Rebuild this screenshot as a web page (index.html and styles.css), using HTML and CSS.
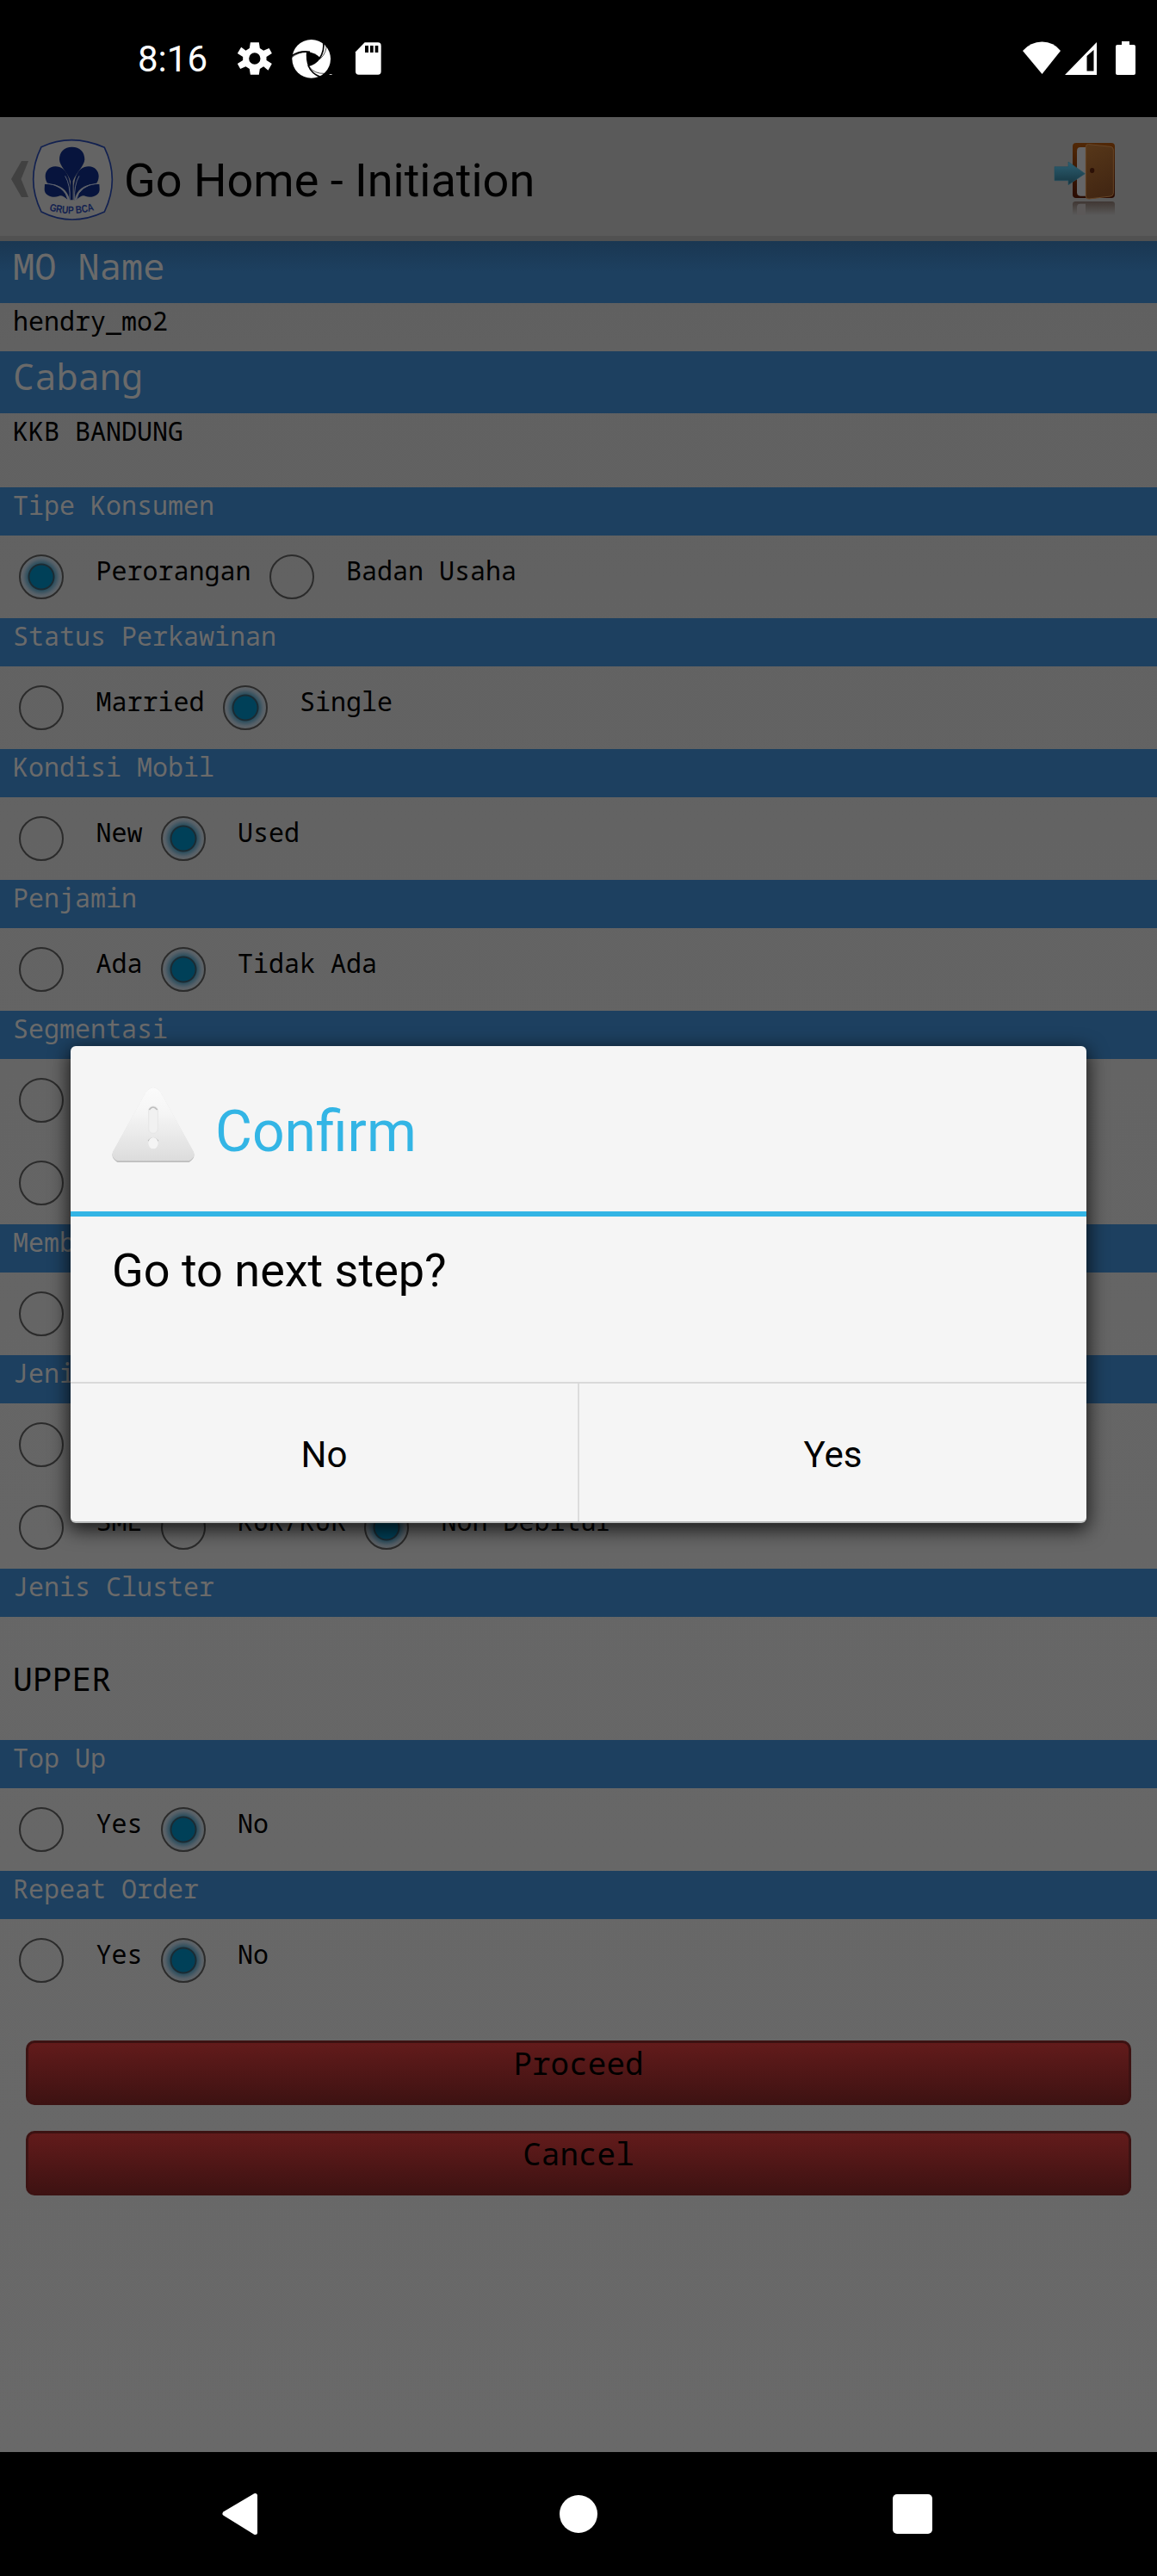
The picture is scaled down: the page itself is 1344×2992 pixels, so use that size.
FILE: index.html
```html
<!DOCTYPE html>
<html lang="id">
<head>
<meta charset="utf-8">
<title>Go Home - Initiation</title>
<link rel="stylesheet" href="styles.css">
</head>
<body>
<div class="screen">
  <header class="status-bar">
    <span class="clock">8:16</span>
    <svg class="notices" width="170" height="48" viewBox="0 0 510 144" fill="#fff">
      <g transform="translate(77.500 72)">
        <path fill-rule="evenodd" d="M-15-56H15L18-36 31-28 50-36 57-24 60-18 41-6V6L60 18 47 41 31 28 18 36 15 56H-15L-18 36-31 28-50 36-60 18-41 6V-6L-60-18-47-40-31-28-18-36ZM0-20A20 20 0 1 0 0 20 20 20 0 1 0 0-20Z"/>
      </g>
      <circle cx="275" cy="73" r="67"/>
      <path fill="#000" d="M258 48Q288 50 307 70Q293 93 264 100Q255 75 258 48Z"/>
      <g fill="none" stroke="#000" stroke-width="5">
        <path d="M206 63Q236 43 270 49M302 74Q323 45 316 9M264 96Q276 125 306 136"/>
        <path d="M327 22Q330 50 306 73M206 68Q232 49 258 50M268 101Q286 126 322 124" stroke-width="2"/>
      </g>
      <path d="M338 126h9v3h-9z" fill="#bbb"/>
      <path d="M462 16H508Q519 16 519 27V117Q519 128 508 128H441Q430 128 430 117V49Z" transform="translate(-1 0)"/>
      <path fill="#000" d="M462 27h12v24h-12zM480 27h11v24h-11zM497 27h11v24h-11z"/>
    </svg>
    <svg class="signals" width="136" height="42" viewBox="0 0 136 42" fill="#fff">
      <path d="M2 13Q11 2.500 24.500 2.500T46 13L24.500 40Z"/>
      <path fill-rule="evenodd" d="M51 41L88 3V41ZM76.500 19V36.500H84.500V12Z"/>
      <path d="M117 2h9v4h5q2 0 2 2v31q0 2-2 2h-19q-2 0-2-2V8q0-2 2-2h5z"/>
    </svg>
  </header>

  <nav class="action-bar">
    <svg class="up" width="22" height="44" viewBox="0 0 22 44"><path d="M13 1H21L12.500 22 21 43H13L1 22Z" fill="#414141"/></svg>
    <svg class="logo" width="97" height="97" viewBox="108 60 291 291">
      <path d="M144 92Q250 43 364 94Q418 205 364 318Q250 372 144 318Q88 205 144 92Z" fill="#646464" stroke="#122150" stroke-width="5"/>
      <g fill="#07143d">
        <path d="M251 92C278 92 295 109 295 136C294 158 266 180 254 211V277H246V211C236 180 207 158 207 136C207 109 224 92 251 92Z"/>
        <path d="M241 206C232 171 212 160 193 160C171 160 158 177 158 193C158 208 164 219 169 222C202 219 236 238 243 277H245V226Z"/>
        <path d="M261 206C270 171 290 160 309 160C331 160 344 177 344 193C344 208 338 219 333 222C300 219 266 238 260 277H257V226Z"/>
        <path d="M156 222C196 220 229 243 236 276C222 263 212 258 203 264C185 271 154 262 155 239Z"/>
        <path d="M346 222C306 220 273 243 266 276C280 263 290 258 299 264C317 271 348 262 347 239Z"/>
      </g>
      <path d="M243 277Q246 226 227 193M260 277Q257 226 276 193M237 277Q228 226 165 219M266 277Q275 226 338 219" fill="none" stroke="#596071" stroke-width="3"/>
      <path id="arc" d="M171 313Q250 337 332 311" fill="none"/>
      <text class="logo-text"><textPath href="#arc" textLength="160" lengthAdjust="spacingAndGlyphs">GRUP BCA</textPath></text>
    </svg>
    <h1 class="title">Go Home - Initiation</h1>
    <svg class="exit" width="76" height="88" viewBox="66 69 228 264">
      <defs>
        <linearGradient id="frame" x2="0" y2="1"><stop stop-color="#512806"/><stop offset="1" stop-color="#290b02"/></linearGradient>
        <linearGradient id="door" x2=".3" y2="1"><stop stop-color="#573719"/><stop offset="1" stop-color="#432713"/></linearGradient>
        <linearGradient id="arrow" x2="0" y2="1"><stop stop-color="#2d6073"/><stop offset="1" stop-color="#16343f"/></linearGradient>
        <linearGradient id="mirror" x2="0" y2="1"><stop stop-color="#403733"/><stop offset="1" stop-color="#5a5a5a"/></linearGradient>
      </defs>
      <path d="M138 330V292Q138 282 148 282H275Q285 282 285 292V330Z" fill="url(#mirror)"/>
      <path d="M153 330V300Q154 290 164 290H183V330Z" fill="#5b5858"/>
      <rect x="138" y="78" width="147" height="192" rx="12" fill="url(#frame)"/>
      <path d="M184 93H165Q153 93 153 106V250Q153 263 165 263H184Z" fill="#656567"/>
      <path d="M184 91Q184 82 194 83L270 91Q280 92 280 102V253Q280 263 270 264L195 273Q184 274 184 264Z" fill="url(#door)" stroke="#664527" stroke-width="3"/>
      <ellipse cx="206" cy="174" rx="8" ry="9" fill="#2b1006"/>
      <path d="M75 161H123V144L181 185 123 224V209H75Z" fill="url(#arrow)" stroke="#23505f" stroke-width="2"/>
    </svg>
  </nav>

  <main class="form">
    <h2 class="bar bar-large bar-first">MO Name</h2>
    <p class="value">hendry_mo2</p>
    <h2 class="bar bar-large">Cabang</h2>
    <p class="value value-tall">KKB BANDUNG</p>

    <h2 class="bar">Tipe Konsumen</h2>
    <div class="options"><label class="option"><i class="radio on"></i>Perorangan</label><label class="option"><i class="radio"></i>Badan Usaha</label></div>
    <h2 class="bar">Status Perkawinan</h2>
    <div class="options"><label class="option"><i class="radio"></i>Married</label><label class="option"><i class="radio on"></i>Single</label></div>
    <h2 class="bar">Kondisi Mobil</h2>
    <div class="options"><label class="option"><i class="radio"></i>New</label><label class="option"><i class="radio on"></i>Used</label></div>
    <h2 class="bar">Penjamin</h2>
    <div class="options"><label class="option"><i class="radio"></i>Ada</label><label class="option"><i class="radio on"></i>Tidak Ada</label></div>
    <h2 class="bar">Segmentasi</h2>
    <div class="options"><label class="option"><i class="radio"></i></label></div>
    <div class="options"><label class="option"><i class="radio"></i></label></div>
    <h2 class="bar">Memb</h2>
    <div class="options"><label class="option"><i class="radio"></i></label></div>
    <h2 class="bar">Jeni</h2>
    <div class="options"><label class="option"><i class="radio"></i></label></div>
    <div class="options"><label class="option"><i class="radio"></i>SME</label><label class="option"><i class="radio"></i>KUK/KUR</label><label class="option"><i class="radio on"></i>Non Debitur</label></div>
    <h2 class="bar">Jenis Cluster</h2>
    <p class="cluster">UPPER</p>
    <h2 class="bar">Top Up</h2>
    <div class="options"><label class="option"><i class="radio"></i>Yes</label><label class="option"><i class="radio on"></i>No</label></div>
    <h2 class="bar">Repeat Order</h2>
    <div class="options"><label class="option"><i class="radio"></i>Yes</label><label class="option"><i class="radio on"></i>No</label></div>

    <div class="actions">
      <button class="action">Proceed</button>
      <button class="action">Cancel</button>
    </div>
  </main>

  <footer class="nav-bar">
    <svg width="44" height="50" viewBox="0 0 44 50"><path d="M4 24.500L39.500 3.500V46.500Z" fill="#fff" stroke="#fff" stroke-width="5" stroke-linejoin="round"/></svg>
    <i class="home"></i>
    <i class="recents"></i>
  </footer>

  <section class="dialog" role="dialog">
    <div class="dialog-head">
      <svg width="98" height="90" viewBox="0 0 294 270">
        <defs><linearGradient id="warn" x2="0" y2="1"><stop stop-color="#fbfbfb"/><stop offset=".35" stop-color="#f5f5f5"/><stop offset="1" stop-color="#dcdcdc"/></linearGradient></defs>
        <path d="M119 22Q147-20 175 22L287 226Q296 246 272 261H22Q-2 246 7 226Z" fill="#bdbdbd"/>
        <path d="M119 20Q147-20 175 20L287 223Q296 243 272 256H22Q-2 243 7 223Z" fill="url(#warn)"/>
        <rect x="131" y="66" width="32" height="94" rx="15" fill="#f1f1f1" stroke="#e6e6e6" stroke-width="3"/>
        <path d="M133 78Q146 60 161 78M130 187Q146 166 164 187" stroke="#bdbdbd" stroke-width="5" fill="none"/>
        <ellipse cx="147" cy="194" rx="17" ry="20" fill="#f4f4f4"/>
      </svg>
      <h2 class="dialog-title">Confirm</h2>
    </div>
    <p class="dialog-text">Go to next step?</p>
    <div class="dialog-buttons">
      <button class="dialog-button">No</button>
      <button class="dialog-button">Yes</button>
    </div>
  </section>
</div>
</body>
</html>
```
FILE: styles.css
```css
* { box-sizing: border-box; margin: 0; padding: 0; }

body {
  width: 1344px;
  background: #000;
  font-family: Roboto, sans-serif;
}

.screen {
  position: relative;
  height: 2992px;
  display: flex;
  flex-direction: column;
  background: linear-gradient(#5b5b5b 136px, #616161 400px, #666 1800px, #696969 2848px);
}

.status-bar {
  height: 136px;
  flex: none;
  display: flex;
  align-items: flex-start;
  padding: 44px 22px 0 160px;
  background: #000;
  color: #fff;
}
.clock { width: 108px; font-size: 42px; line-height: 50px; }
.notices { margin: 0 0 0 2px; overflow: visible; }
.signals { margin: 2px 0 0 auto; }

.action-bar {
  height: 144px;
  flex: none;
  display: flex;
  align-items: flex-start;
  padding: 24px 46px 0 12px;
  background: #5a5a5a;
  border-bottom: 6px solid #515151;
}
.up { margin: 26px 2px 0 0; }
.logo-text { font: bold 37px "Liberation Sans", sans-serif; fill: #122150; }
.title {
  margin: 18px auto 0 11px;
  font-size: 54px;
  font-weight: 400;
  line-height: 64px;
  color: #000;
}
.exit { margin-top: 3px; }

.form {
  flex: 1;
  font: 30px/36px "Droid Sans Mono", "Noto Sans Mono", "DejaVu Sans Mono", monospace;
  color: #000;
}
.bar {
  height: 56px;
  padding: 3px 15px;
  background: #1d4060;
  color: #6a6a6a;
  font: inherit;
}
.bar-large { height: 72px; padding-top: 4px; font-size: 42px; line-height: 50px; }
.bar-first { background: linear-gradient(#1a3752, #1d4060 36px); }
.value { height: 56px; padding: 3px 15px; }
.value-tall { height: 86px; }
.cluster { height: 143px; padding: 48px 15px; font-size: 38px; line-height: 46px; }

.options { height: 96px; display: flex; }
.option { display: flex; margin-right: -1px; padding-top: 23px; }
.radio {
  width: 52px;
  height: 52px;
  margin: -1px 37.5px 0 22px;
  border: 2px solid #2b2b2b;
  border-radius: 50%;
}
.radio.on {
  background: radial-gradient(circle at 50% 50%, #004058 13px, #1b2b33 14px, #1b2b33 15px, #2e4f5e 16px, #566068 21px, #626465 25px);
}

.actions {
  display: flex;
  flex-direction: column;
  gap: 30px;
  padding: 45px 30px 0;
}
.action {
  height: 75px;
  padding-bottom: 23px;
  border: 3px solid #3c1212;
  border-width: 3px 3px 1px;
  border-radius: 10px;
  background: linear-gradient(#621b1b, #3d1212);
  color: #000;
  font: 36px/42px "Droid Sans Mono", "Noto Sans Mono", "DejaVu Sans Mono", monospace;
}

.nav-bar {
  height: 144px;
  flex: none;
  display: flex;
  align-items: center;
  justify-content: space-between;
  padding: 0 261px 0 257px;
  background: #000;
}
.home { width: 44px; height: 44px; margin-left: 6px; border-radius: 50%; background: #fff; }
.recents { width: 46px; height: 46px; border-radius: 5px; background: #fff; }

.dialog {
  position: absolute;
  left: 82px;
  top: 1215px;
  width: 1180px;
  height: 554px;
  display: flex;
  flex-direction: column;
  background: #f5f5f5;
  border-radius: 6px;
  border-bottom: 2px solid #b9bbbb;
  box-shadow: 0 6px 22px 2px rgba(0, 0, 0, .75);
}
.dialog-head {
  height: 198px;
  display: flex;
  align-items: flex-start;
  padding: 48px 47px 0;
  border-bottom: 6px solid #33b5e5;
}
.dialog-title {
  margin: 13px 0 0 23px;
  font-size: 66px;
  font-weight: 400;
  line-height: 78px;
  color: #33b5e5;
}
.dialog-text {
  height: 192px;
  padding: 31px 48px;
  font-size: 54px;
  line-height: 64px;
  color: #000;
}
.dialog-buttons {
  flex: 1;
  display: flex;
  border-top: 2px solid #d9d9d9;
}
.dialog-button {
  flex: 1;
  padding-top: 5px;
  border: 0;
  background: none;
  font: 42px/50px Roboto, sans-serif;
  color: #000;
}
.dialog-button + .dialog-button { border-left: 2px solid #dcdcdc; }
```
